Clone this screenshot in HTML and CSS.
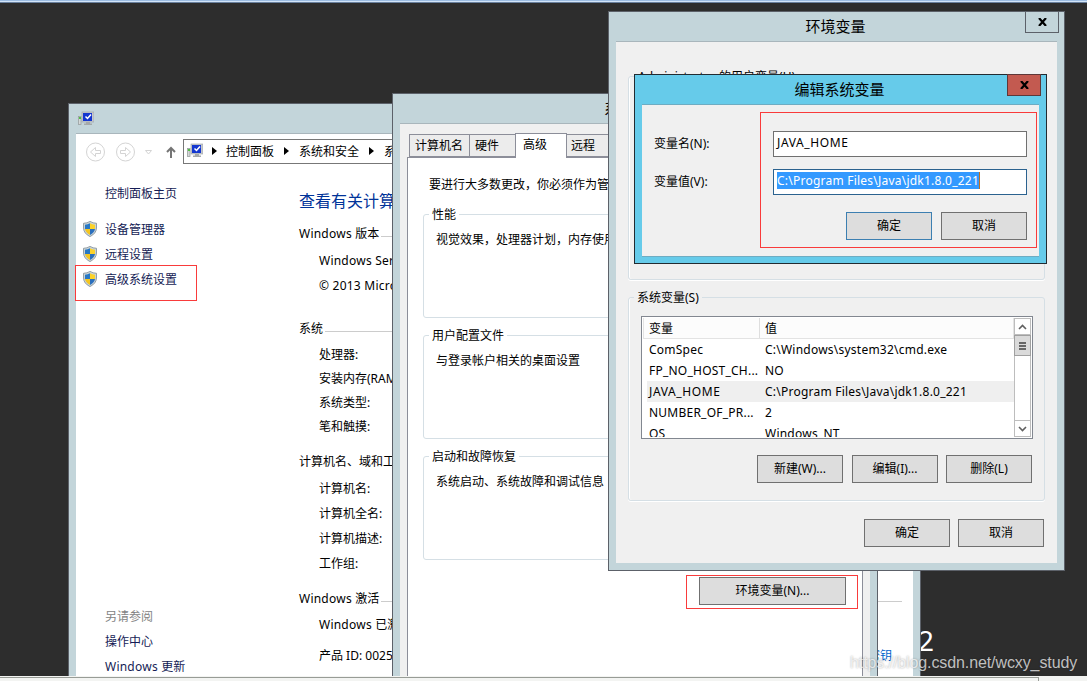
FILE: index.html
```html
<!DOCTYPE html>
<html lang="zh-CN">
<head>
  <meta charset="utf-8">
  <title>环境变量</title>
  <link rel="stylesheet" href="styles.css">
</head>
<body>
  <svg width="0" height="0" class="defs">
    <symbol id="computer" viewBox="0 0 16 16">
      <rect x="0.5" y="5.500" width="2.500" height="8" fill="#d5d8d8" stroke="#9aa0a0" stroke-width="0.8" />
      <rect x="1" y="6" width="2" height="2" fill="#4fc043" />
      <rect x="4" y="1" width="12" height="10" fill="#c5c8cc" stroke="#9aa0a6" stroke-width="0.6" />
      <rect x="5" y="2" width="9" height="8" fill="#1437d0" />
      <path d="M7.500 5.500l2 2 3.500-4" fill="none" stroke="#fff" stroke-width="1.500" />
      <path d="M8 11h4v1.500h2V14H6v-1.500h2z" fill="#a5a9aa" />
    </symbol>
    <symbol id="shield" viewBox="0 0 14 16">
      <path d="M7 .4Q10 2.200 13.500 2.300V7Q13.300 12.500 7 15.600 .7 12.500 .5 7V2.300Q4 2.200 7 .4z" fill="#c9d3d8" stroke="#7d8b93" stroke-width="0.8" />
      <path d="M7 2.200V8H2V3.700Q4.800 3.600 7 2.200z" fill="#2878c4" />
      <path d="M7 2.200V8h5V3.700Q9.200 3.600 7 2.200z" fill="#fbd22c" />
      <path d="M2 8h5v5.900Q2.600 11.500 2 8z" fill="#f4c51f" />
      <path d="M12 8H7v5.900Q11.400 11.500 12 8z" fill="#2a6fbd" />
    </symbol>
  </svg>

  <div class="desktop">
    <div class="topline"></div>
    <div class="build">2</div>

    <!-- system -->
    <div class="window system">
      <div class="titlebar"><svg class="icon"><use href="#computer" /></svg></div>
      <div class="client">
        <div class="nav">
          <svg width="82" height="20" viewBox="0 0 82 20" fill="none" stroke="#d4d4d4">
            <circle cx="10.500" cy="10" r="9" />
            <path d="M5.500 10l5-4.500v3h5v3h-5v3z" />
            <circle cx="40.500" cy="10" r="9" />
            <path d="M45.500 10l-5-4.500v3h-5v3h5v3z" />
            <path d="M60.500 8.500h6l-3 3.500z" />
          </svg>
          <svg class="up" width="10" height="12" viewBox="0 0 10 12" fill="none" stroke="#757575" stroke-width="2"><path d="M5 12V2M1 6l4-4 4 4" /></svg>
          <div class="address">
            <svg class="icon"><use href="#computer" /></svg>
            <i class="arrow"></i><span>控制面板</span>
            <i class="arrow"></i><span>系统和安全</span>
            <i class="arrow"></i><span>系统</span>
          </div>
        </div>
        <div class="columns">
          <div class="sidebar">
            <a class="home">控制面板主页</a>
            <a><svg class="shield"><use href="#shield" /></svg>设备管理器</a>
            <a><svg class="shield"><use href="#shield" /></svg>远程设置</a>
            <a><svg class="shield"><use href="#shield" /></svg>高级系统设置</a>
            <div class="seealso">
              <p>另请参阅</p>
              <a>操作中心</a>
              <a><span class="latin">Windows </span>更新</a>
            </div>
          </div>
          <div class="info">
            <h1>查看有关计算机</h1>
            <section>
              <h2><span class="latin">Windows </span>版本</h2>
              <p class="latin">Windows Server</p>
              <p class="latin">© 2013 Micros</p>
            </section>
            <section class="spec">
              <h2>系统</h2>
              <p>处理器:</p>
              <p>安装内存(RAM):</p>
              <p>系统类型:</p>
              <p>笔和触摸:</p>
            </section>
            <section class="names">
              <h2>计算机名、域和工作组</h2>
              <p>计算机名:</p>
              <p>计算机全名:</p>
              <p>计算机描述:</p>
              <p>工作组:</p>
            </section>
            <section class="activation">
              <h2><span class="latin">Windows </span>激活</h2>
              <p><span class="latin">Windows </span>已激活</p>
              <p class="product">产品 ID: 00252<a>密钥</a></p>
            </section>
          </div>
        </div>
      </div>
    </div>

    <!-- system properties -->
    <div class="window props">
      <div class="titlebar">系统属性</div>
      <div class="client">
        <div class="tabs">
          <span class="tab name">计算机名</span>
          <span class="tab hardware">硬件</span>
          <span class="tab active">高级</span>
          <span class="tab remote">远程</span>
        </div>
        <div class="page">
          <p class="intro">要进行大多数更改，你必须作为管理</p>
          <fieldset><legend>性能</legend><p>视觉效果，处理器计划，内存使用</p></fieldset>
          <fieldset><legend>用户配置文件</legend><p>与登录帐户相关的桌面设置</p></fieldset>
          <fieldset><legend>启动和故障恢复</legend><p>系统启动、系统故障和调试信息</p></fieldset>
          <button class="env-btn">环境变量(N)...</button>
        </div>
      </div>
    </div>

    <!-- environment variables -->
    <div class="window env">
      <div class="titlebar">环境变量</div>
      <span class="close"><svg width="9" height="8" viewBox="0 0 9 8"><path d="M1 0l7 8M8 0L1 8" stroke="#000" stroke-width="2.200" /></svg></span>
      <div class="client">
        <fieldset class="user-vars"><legend>Administrator 的用户变量(U)</legend></fieldset>
        <fieldset class="sys-vars">
          <legend>系统变量(S)</legend>
          <div class="list">
            <div class="table">
              <div class="row head"><span>变量</span><span>值</span></div>
              <div class="row"><span>ComSpec</span><span>C:\Windows\system32\cmd.exe</span></div>
              <div class="row"><span>FP_NO_HOST_CH...</span><span>NO</span></div>
              <div class="row selected"><span class="wide">JAVA_HOME</span><span>C:\Program Files\Java\jdk1.8.0_221</span></div>
              <div class="row"><span>NUMBER_OF_PR...</span><span>2</span></div>
              <div class="row"><span>OS</span><span>Windows_NT</span></div>
            </div>
            <div class="scrollbar">
              <span class="sb-btn"><svg width="9" height="6" viewBox="0 0 9 6"><path d="M1 5l3.500-3.500L8 5" /></svg></span>
              <span class="thumb"><i></i><i></i><i></i></span>
              <span class="sb-btn down"><svg width="9" height="6" viewBox="0 0 9 6"><path d="M1 1l3.500 3.500L8 1" /></svg></span>
            </div>
          </div>
          <div class="buttons">
            <button>新建(W)...</button>
            <button>编辑(I)...</button>
            <button>删除(L)</button>
          </div>
        </fieldset>
        <div class="buttons">
          <button>确定</button>
          <button>取消</button>
        </div>
      </div>
    </div>

    <!-- edit variable -->
    <div class="window edit">
      <div class="titlebar">编辑系统变量</div>
      <span class="close"><svg width="9" height="8" viewBox="0 0 9 8"><path d="M1 0l7 8M8 0L1 8" stroke="#000" stroke-width="2.200" /></svg></span>
      <div class="client">
        <div class="field"><label>变量名(N):</label><div class="input wide">JAVA_HOME</div></div>
        <div class="field"><label>变量值(V):</label><div class="input focus"><span class="latin">C:\Program Files\Java\jdk1.8.0_221</span></div></div>
        <div class="buttons">
          <button class="default">确定</button>
          <button>取消</button>
        </div>
      </div>
    </div>

    <div class="mark mark-advanced"></div>
    <div class="mark mark-env"></div>
    <div class="mark mark-edit"></div>
    <div class="taskline"><span></span></div>
    <div class="watermark">https://blog.csdn.net/wcxy_study</div>
  </div>
</body>
</html>
```
FILE: styles.css
```css
* {
  box-sizing: border-box;
}

body {
  margin: 0;
  font-family: "Noto Sans", "Noto Sans CJK SC", sans-serif;
  font-size: 12px;
  color: #000;
}

p, h1, h2 {
  margin: 0;
  font-weight: normal;
}

.defs {
  position: absolute;
}

.latin {
  letter-spacing: 0.23px;
  white-space: pre;
}

.desktop {
  position: relative;
  width: 1087px;
  height: 681px;
  overflow: hidden;
  background: #2d2d2d;
  white-space: nowrap;
}

.topline {
  height: 3px;
  background: linear-gradient(#9dbde3 0 1px, #d3e5f8 1px 2px, #69809d 2px);
}

.build {
  position: absolute;
  left: 918px;
  top: 621px;
  font-size: 28px;
  line-height: 38px;
  color: #fff;
}

/* windows */
.window {
  position: absolute;
  display: flex;
  flex-direction: column;
  padding: 0 7px 7px;
  border: 1px solid #5c6169;
  background: #c3d5da;
}

.titlebar {
  height: 29px;
  padding-right: 2px;
  line-height: 29px;
  font-size: 15px;
  text-align: center;
  flex: none;
}

.client {
  flex: 1;
  min-height: 0;
  overflow: hidden;
  border-top: 1px solid #a9b6bc;
  background: #f0f0f0;
}

.close {
  position: absolute;
  top: -1px;
  right: 5px;
  width: 34px;
  height: 22px;
  display: flex;
  align-items: center;
  justify-content: center;
  border: 1px solid #5c6169;
}

.icon {
  width: 16px;
  height: 16px;
}

button {
  width: 86px;
  height: 28px;
  padding: 0 0 2px;
  border: 1px solid #707070;
  background: #ddd;
  color: #000;
  font: inherit;
}

.buttons {
  display: flex;
  justify-content: flex-end;
  gap: 8px;
}

/* system */
.system {
  left: 68px;
  top: 103px;
  width: 853px;
  height: 590px;
}

.system .titlebar {
  display: flex;
  align-items: center;
  padding-left: 2px;
}

.system .client {
  background: #fff;
}

.nav {
  display: flex;
  align-items: center;
  height: 36px;
  padding-left: 9px;
}

.up {
  margin-left: -1px;
}

.address {
  display: flex;
  align-items: center;
  flex: 1;
  height: 25px;
  margin: -1px 9px 0 7px;
  padding: 0 0 2px 3px;
  border: 1px solid #777;
}

.arrow {
  width: 0;
  border: 4px solid transparent;
  border-left: 5px solid #000;
  border-right: 0;
  margin: 0 9px 0 9px;
}

.address span + .arrow {
  margin-left: 10px;
  margin-right: 10px;
}

.columns {
  display: flex;
}

.sidebar {
  width: 223px;
  padding: 11px 0 0 7px;
}

.sidebar a, .seealso p {
  display: flex;
  align-items: center;
  height: 25px;
  line-height: 25px;
  color: #151c55;
}

.sidebar .home {
  height: 24px;
  margin: 0 0 12px 22px;
}

.shield {
  width: 14px;
  height: 16px;
  margin: -1px 8px 0 0;
}

.seealso {
  margin: 312px 0 0 22px;
}

.seealso p {
  color: #838383;
}

.info {
  flex: 1;
  padding: 19px 11px 0 0;
}

.info h1 {
  font-size: 16px;
  line-height: 24px;
  color: #003399;
}

.info h2 {
  display: flex;
  font-size: 12px;
  line-height: 24px;
}

.info h2::after {
  content: "";
  flex: 1;
  height: 1px;
  margin: 14px 0 0 2px;
  background: #ccc;
}

.info section {
  margin-top: 9px;
}

.info p {
  padding-left: 20px;
  line-height: 25px;
}

.info h2 + p {
  margin-top: 2px;
}

.info .spec {
  margin-top: 19px;
}

.spec p {
  line-height: 24px;
}

.info .names {
  margin-top: 11px;
}

.info .activation {
  margin-top: 11px;
}

.activation h2 + p {
  margin-top: 1px;
}

.activation .product {
  display: flex;
  justify-content: space-between;
  margin-top: 6px;
  padding-right: 10px;
}

.product a {
  color: #0066cc;
}

/* system properties */
.props {
  left: 392px;
  top: 93px;
  width: 486px;
  height: 600px;
}

.props .client {
  display: flex;
  flex-direction: column;
  padding: 9px 7px 0;
}

.tabs {
  display: flex;
  align-items: flex-end;
  height: 25px;
  padding-left: 2px;
  margin-bottom: -1px;
  position: relative;
}

.tab {
  height: 23px;
  line-height: 21px;
  margin-bottom: 1px;
  padding-left: 5px;
  border: 1px solid #8c8e99;
  background: #ececec;
}

.tab.name {
  width: 61px;
}

.tab.hardware {
  width: 47px;
  margin-left: -1px;
}

.tab.active {
  width: 52px;
  height: 25px;
  margin: 0 -1px;
  padding-left: 7px;
  border-bottom: 0;
  background: #fff;
  z-index: 1;
}

.tab.remote {
  width: 47px;
  padding-left: 4px;
}

.page {
  flex: 1;
  padding: 15px 15px 0;
  border: 1px solid #8c8e99;
  background: #fff;
}

.intro {
  height: 33px;
  padding-left: 6px;
  line-height: 24px;
}

fieldset {
  min-width: 0;
  margin: 0;
  padding: 0;
  border: 1px solid #d5dfe5;
  border-radius: 3px;
}

legend {
  margin-left: 5px;
  padding: 0 3px;
  line-height: 17px;
}

.page fieldset {
  height: 112px;
  margin-bottom: 9px;
}

.page fieldset p {
  padding: 6px 0 0 12px;
  line-height: 22px;
}

.page .env-btn {
  display: block;
  width: 147px;
  margin: 17px 0 0 276px;
}

/* environment variables */
.env {
  left: 608px;
  top: 11px;
  width: 457px;
  height: 560px;
}

.env .client {
  padding: 26px 12px 0;
}

.env fieldset {
  box-shadow: inset 1px 0 #fff, 0 1px #fff;
}

.user-vars {
  height: 212px;
}

.env .sys-vars {
  height: 212px;
  margin-top: 9px;
  padding: 10px 11px 0 12px;
}

.env legend {
  margin-left: -7px;
  background: #f0f0f0;
}

.env .user-vars legend {
  margin-left: 6px;
}

.list {
  display: flex;
  height: 123px;
  padding: 1px;
  border: 1px solid #828790;
  background: #fff;
}

.table {
  flex: 1;
  overflow: hidden;
}

.row {
  display: flex;
  height: 21px;
  margin-left: 4px;
  line-height: 21px;
  letter-spacing: 0.23px;
}

.wide {
  letter-spacing: 0.6px;
}

.row span:first-child {
  width: 112px;
  padding-left: 2px;
}

.row span:last-child {
  flex: 1;
  padding-left: 6px;
}

.head {
  margin-left: 0;
  border: 1px solid #e3e3e3;
  border-top: 0;
  background: #fcfcfc;
  letter-spacing: 0;
}

.row.head span:first-child {
  width: 116px;
  padding-left: 5px;
  border-right: 1px solid #dedede;
}

.row.head span:last-child {
  padding-left: 5px;
}

.selected {
  background: #efefef;
}

.scrollbar {
  display: flex;
  flex-direction: column;
  width: 17px;
  border: 1px solid #bdbdbd;
  border-width: 0 1px;
}

.sb-btn, .thumb {
  height: 17px;
  display: flex;
  align-items: center;
  justify-content: center;
  border: 1px solid #bdbdbd;
  border-width: 1px 0;
}

.sb-btn path {
  fill: none;
  stroke: #606060;
  stroke-width: 1.6;
}

.thumb {
  height: 21px;
  margin: 0 -1px;
  flex-direction: column;
  gap: 1px;
  border: 1px solid #a0a0a0;
  background: #dadada;
}

.thumb i {
  width: 7px;
  height: 2px;
  background: #666;
}

.down {
  margin-top: auto;
}

.sys-vars .buttons {
  margin: 16px 1px 0 0;
}

.sys-vars button:first-child {
  margin-right: 1px;
}

.client > .buttons {
  margin: 18px 1px 0 0;
}

/* edit variable */
.edit {
  left: 634px;
  top: 74px;
  width: 413px;
  height: 190px;
  padding-bottom: 6px;
  border-color: #222b31;
  background: #66cbea;
}

.edit .client {
  padding: 26px 12px 0;
  border-top-color: #6eacc2;
  border-bottom: 1px solid #6eacc2;
}

.edit .close {
  background: #c35a50;
  border-color: #5e3738;
}

.field {
  display: flex;
  margin-bottom: 12px;
}

.field label {
  width: 119px;
  line-height: 25px;
}

.input {
  flex: 1;
  height: 26px;
  padding: 2px 3px;
  line-height: 18px;
  border: 1px solid #707070;
  background: #fff;
}

.input.focus {
  border-color: #2b628f;
}

.input span {
  display: inline-block;
  height: 17px;
  line-height: 17px;
  background: #3399ff;
  color: #fff;
  border-right: 1px solid #c07020;
}

.edit .client > .buttons {
  margin: 17px 0 0;
  gap: 9px;
}

.default {
  border-color: #3c7fb1;
}

/* red highlight boxes */
.mark {
  position: absolute;
  border: 1px solid #f93b3b;
}

.mark-advanced {
  left: 75px;
  top: 265px;
  width: 122px;
  height: 36px;
}

.mark-env {
  left: 686px;
  top: 575px;
  width: 172px;
  height: 34px;
}

.mark-edit {
  left: 760px;
  top: 112px;
  width: 277px;
  height: 136px;
}

.taskline {
  position: absolute;
  left: 0;
  right: 0;
  bottom: 0;
  height: 5px;
  background: #f3f4f2;
}

.taskline span {
  display: block;
  width: 1039px;
  height: 4px;
  margin-top: 1px;
  border: 1px solid #989c96;
  border-width: 1px 1px 0 0;
}

.watermark {
  position: absolute;
  left: 850px;
  top: 653px;
  font: 16px/20px "Liberation Sans", Arial, sans-serif;
  letter-spacing: -0.1px;
  color: rgba(255, 255, 255, 0.72);
  text-shadow: 0 0 2px rgba(0, 0, 0, 0.35);
}
```
